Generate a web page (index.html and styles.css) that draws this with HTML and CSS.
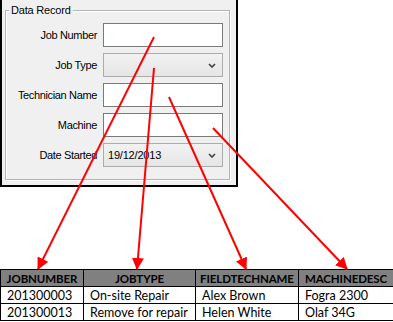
FILE: index.html
```html
<!doctype html>
<html lang="en">
  <head>
    <meta charset="UTF-8" />
    <title>Data Record mapping</title>
    <link rel="stylesheet" href="styles.css">
  </head>
  <body>
    <div class="panel">
      <fieldset class="group">
        <legend>Data Record</legend>
        <div class="form-grid">
          <label>Job Number</label>
          <div class="textbox"></div>

          <label>Job Type</label>
          <div class="combo">
            <span class="combo-value"></span>
            <svg class="chevron" viewBox="0 0 8 5"><polyline points="1,1 4,4 7,1" /></svg>
          </div>

          <label>Technician Name</label>
          <div class="textbox"></div>

          <label>Machine</label>
          <div class="textbox"></div>

          <label>Date Started</label>
          <div class="combo">
            <span class="combo-value">19/12/2013</span>
            <svg class="chevron" viewBox="0 0 8 5"><polyline points="1,1 4,4 7,1" /></svg>
          </div>
        </div>
      </fieldset>
    </div>

    <table class="sheet">
      <colgroup>
        <col class="c1">
        <col class="c2">
        <col class="c3">
        <col class="c4">
      </colgroup>
      <thead>
        <tr>
          <th>JOBNUMBER</th>
          <th>JOBTYPE</th>
          <th>FIELDTECHNAME</th>
          <th>MACHINEDESC</th>
        </tr>
      </thead>
      <tbody>
        <tr>
          <td>201300003</td>
          <td>On-site Repair</td>
          <td>Alex Brown</td>
          <td>Fogra 2300</td>
        </tr>
        <tr>
          <td>201300013</td>
          <td>Remove for repair</td>
          <td>Helen White</td>
          <td>Olaf 34G</td>
        </tr>
      </tbody>
    </table>

    <!-- arrows from the form fields to the table columns -->
    <svg class="arrows" viewBox="0 0 393 322">
      <defs>
        <marker id="head" markerUnits="userSpaceOnUse" markerWidth="12" markerHeight="12" refX="11" refY="6" orient="auto">
          <path d="M0,0 L12,6 L0,12 z" fill="#ff0000" />
        </marker>
      </defs>
      <line x1="154" y1="37" x2="38" y2="269" marker-end="url(#head)" />
      <line x1="154" y1="68" x2="137" y2="269" marker-end="url(#head)" />
      <line x1="169" y1="97" x2="246" y2="269" marker-end="url(#head)" />
      <line x1="213" y1="128" x2="347" y2="269" marker-end="url(#head)" />
    </svg>
  </body>
</html>
```

FILE: styles.css
```css
* {
  box-sizing: border-box;
}

body {
  margin: 0;
  width: 393px;
  height: 322px;
  background: #fff;
  position: relative;
  overflow: hidden;
  font-family: "Liberation Sans", Arial, sans-serif;
}

.panel {
  width: 238px;
  height: 187px;
  background: #f0f0f0;
  border-left: 2px solid #000;
  border-right: 2px solid #000;
  border-bottom: 2px solid #000;
  padding: 4px 0 0 3px;
}

.group {
  margin: 0;
  width: 225px;
  height: 176px;
  border: 1px solid #b4b4b4;
  box-shadow: inset 1px 1px 0 #fff, 1px 1px 0 #fff;
  padding: 7px 0 0 0;
}

.group legend {
  font-size: 11px;
  letter-spacing: -0.2px;
  color: #000;
  padding: 0 2px;
  margin-left: 3px;
}

.form-grid {
  display: grid;
  grid-template-columns: 91px 120px;
  column-gap: 6px;
  row-gap: 6px;
  grid-auto-rows: 24px;
}

.form-grid label {
  font-size: 11px;
  letter-spacing: -0.35px;
  color: #000;
  text-align: right;
  align-self: center;
  white-space: nowrap;
}

.textbox {
  background: #fff;
  border: 1px solid #7a7a7a;
}

.combo {
  display: flex;
  align-items: center;
  justify-content: space-between;
  padding: 0 6px 0 4px;
  border: 1px solid #acacac;
  background: linear-gradient(#f2f2f2, #e5e5e5);
  font-size: 11px;
  letter-spacing: -0.2px;
}

.chevron {
  width: 8px;
  height: 5px;
  fill: none;
  stroke: #404040;
  stroke-width: 1.6;
}

.sheet {
  margin-top: 82px;
  border-collapse: collapse;
  table-layout: fixed;
  width: 393px;
  font-family: Lato, "Open Sans", sans-serif;
  font-size: 12.5px;
  color: #000;
}

.sheet .c1 { width: 83px; }
.sheet .c2 { width: 112px; }
.sheet .c3 { width: 103px; }
.sheet .c4 { width: 95px; }

.sheet th,
.sheet td {
  border: 1px solid #000;
  height: 17px;
  padding: 0 0 0 6px;
  line-height: 15px;
  white-space: nowrap;
  overflow: hidden;
}

.sheet th {
  background: #808080;
  font-size: 11.5px;
  font-weight: 700;
  letter-spacing: -0.1px;
  text-align: center;
  padding: 0;
}

.sheet td {
  text-align: left;
}

.arrows {
  position: absolute;
  left: 0;
  top: 0;
  width: 393px;
  height: 322px;
  pointer-events: none;
}

.arrows line {
  stroke: #ff0000;
  stroke-width: 2;
}
```
